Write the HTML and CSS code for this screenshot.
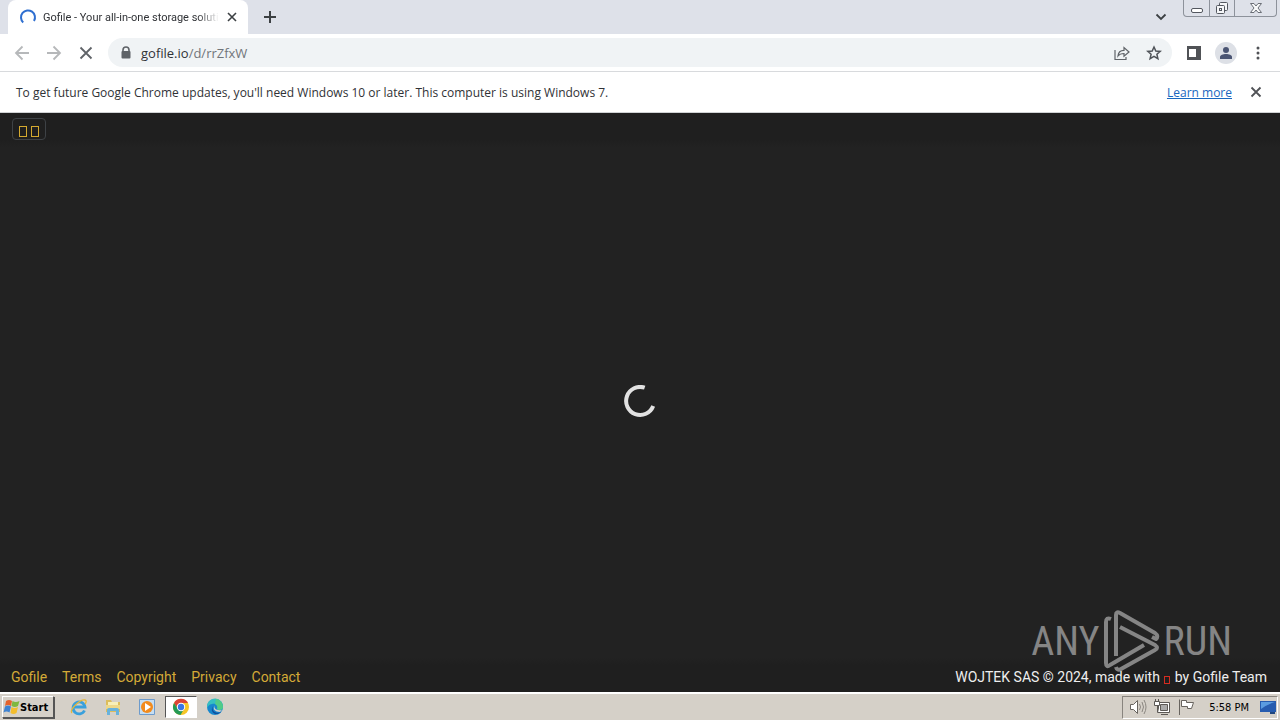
FILE: index.html
```html
<!DOCTYPE html>
<html lang="en">
<head>
<meta charset="utf-8">
<title>Gofile - Your all-in-one storage solution</title>
<link rel="stylesheet" href="styles.css">
</head>
<body>
<header class="tabstrip">
  <div class="tab">
    <svg class="tab-spinner" width="18" height="18" viewBox="0 0 18 18"><path d="M4.200 14.500A7 7 0 1 1 15 13" fill="none" stroke="#2f6fd0" stroke-width="2"/></svg>
    <span class="tab-title">Gofile - Your all-in-one storage soluti</span>
    <button class="icon-btn tab-close" aria-label="Close tab"><svg width="16" height="16" viewBox="0 0 16 16"><path d="M4 4l8 8M12 4l-8 8" stroke="#3c4043" stroke-width="1.600"/></svg></button>
  </div>
  <button class="icon-btn new-tab" aria-label="New tab"><svg width="16" height="16" viewBox="0 0 16 16"><path d="M8 2v12M2 8h12" stroke="#3c4043" stroke-width="2"/></svg></button>
  <div class="window-area">
    <button class="icon-btn tab-search" aria-label="Search tabs"><svg width="16" height="16" viewBox="0 0 16 16"><path d="M3.500 5.500L8 10l4.500-4.500" fill="none" stroke="#3c4043" stroke-width="1.800"/></svg></button>
    <div class="window-controls">
      <button aria-label="Minimize"><svg width="14" height="16" viewBox="0 0 14 16"><rect x="1.500" y="8.500" width="11" height="4" rx="1.500" fill="#fff" stroke="#53575f"/></svg></button>
      <button aria-label="Restore"><svg width="14" height="16" viewBox="0 0 14 16"><g fill="#f5f6f8" stroke="#53575f"><rect x="4.500" y="2.500" width="8" height="8" rx="1"/><rect x="1.500" y="5.500" width="8" height="8" rx="1"/><rect x="4.500" y="8.500" width="2" height="2"/></g></svg></button>
      <button aria-label="Close window"><svg width="14" height="16" viewBox="0 0 14 16"><path d="M1.500 3.500h3.500l2 2.500 2-2.500h3.500L9 8l3.500 4.500H9L7 10l-2 2.500H1.500L5 8z" fill="#f8f9fa" stroke="#6b6f77"/></svg></button>
    </div>
  </div>
</header>
<nav class="toolbar" aria-label="Browser">
  <button class="icon-btn" aria-label="Back"><svg width="16" height="16" viewBox="0 0 16 16"><path d="M15 8H2M8.500 1.500L2 8l6.500 6.500" fill="none" stroke="#b6b8ba" stroke-width="1.800"/></svg></button>
  <button class="icon-btn" aria-label="Forward"><svg width="16" height="16" viewBox="0 0 16 16"><path d="M1 8h13M7.500 1.500L14 8l-6.500 6.500" fill="none" stroke="#b6b8ba" stroke-width="1.800"/></svg></button>
  <button class="icon-btn" aria-label="Stop"><svg width="16" height="16" viewBox="0 0 16 16"><path d="M2.500 2.500l11 11M13.500 2.500l-11 11" stroke="#5f6368" stroke-width="1.800"/></svg></button>
  <div class="omnibox">
    <svg width="12" height="14" viewBox="0 0 12 14"><path d="M3 6V4a3 3 0 0 1 6 0v2" fill="none" stroke="#5f6368" stroke-width="1.600"/><rect x="1.500" y="5" width="9" height="7.500" rx="1" fill="#5f6368"/></svg>
    <span class="url">gofile.io<span class="url-path">/d/rrZfxW</span></span>
    <button class="icon-btn" aria-label="Share"><svg width="16" height="16" viewBox="0 0 16 16"><path d="M1 5v9.500h11V12M4 11c.3-4 2.500-5.700 6-5.700V2.500L15 7l-5 4.300V8.500C7.500 8.500 5.500 9 4 11z" fill="none" stroke="#5f6368" stroke-width="1.200"/></svg></button>
    <button class="icon-btn" aria-label="Bookmark"><svg width="16" height="16" viewBox="0 0 16 16"><path d="M8 2l1.800 4 4.400.4-3.300 2.900 1 4.300L8 11.300l-3.900 2.300 1-4.300-3.300-2.900L6.200 6z" fill="none" stroke="#4f5358" stroke-width="1.500"/></svg></button>
  </div>
  <button class="icon-btn" aria-label="Side panel"><svg width="16" height="16" viewBox="0 0 16 16"><path d="M1 1h14v14H1z" fill="#505256"/><path d="M3 4h7v8H3z" fill="#fff"/></svg></button>
  <button class="avatar" aria-label="Profile"><svg width="14" height="14" viewBox="0 0 14 14"><circle cx="7" cy="4" r="3" fill="#4b5573"/><path d="M1 13v-2c0-2 3-3 6-3s6 1 6 3v2z" fill="#4b5573"/></svg></button>
  <button class="icon-btn" aria-label="Menu"><svg width="16" height="16" viewBox="0 0 16 16" fill="#505256"><circle cx="8" cy="3" r="1.500"/><circle cx="8" cy="8" r="1.500"/><circle cx="8" cy="13" r="1.500"/></svg></button>
</nav>
<section class="infobar">
  <span class="infobar-text">To get future Google Chrome updates, you'll need Windows 10 or later. This computer is using Windows 7.</span>
  <a href="#">Learn more</a>
  <button class="icon-btn" aria-label="Dismiss"><svg width="16" height="16" viewBox="0 0 16 16"><path d="M3.500 3.500l9 9M12.500 3.500l-9 9" stroke="#505256" stroke-width="1.800"/></svg></button>
</section>
<div class="page">
  <div class="page-top"><button class="sidebar-toggle" aria-label="Toggle sidebar"><span class="missing"></span><span class="missing"></span></button></div>
  <main class="page-main">
    <svg width="32" height="32" viewBox="0 0 32 32"><path d="M20.700 2.700A14 14 0 1 0 29.200 21" fill="none" stroke="#e2e2e2" stroke-width="4"/></svg>
  </main>
  <footer class="page-footer">
    <nav class="footer-links" aria-label="Footer"><a href="#">Gofile</a><a href="#">Terms</a><a href="#">Copyright</a><a href="#">Privacy</a><a href="#">Contact</a></nav>
    <p class="credit">WOJTEK SAS © 2024, made with <span class="missing missing-red"></span> by Gofile Team</p>
  </footer>
  <div class="watermark">
    <span>ANY</span>
    <svg width="56" height="62" viewBox="0 0 56 62" fill="none" stroke="#858585" stroke-width="4" stroke-linejoin="round"><path d="M7 9Q2 7 2 12v41q0 5 4 2l34-20M12 46V5q0-4 4-2l35 20q4 3 1 6l-4-2M16 17l35 18q4 3 0 5L17 59q-4 2-5-2"/></svg>
    <span>RUN</span>
  </div>
</div>
<footer class="taskbar">
  <button class="start"><svg width="17" height="16" viewBox="0 0 17 16"><path d="M3 2q3-2 6 0L8 7Q5 5 2 7z" fill="#e5632d"/><path d="M9.500 2q3 2 7 0l-1.500 5q-3 2-6.500 0z" fill="#7eb83f"/><path d="M2 7.500q3-2 6 0l-1.500 6q-3-2-6 0z" fill="#3f83d2"/><path d="M8.500 8q3 2 6.500 0l-1.500 6q-3 2-6 0z" fill="#f3bd2d"/></svg>Start</button>
  <div class="launchers">
    <button aria-label="Internet Explorer"><svg width="18" height="18" viewBox="0 0 18 18" fill="none"><path d="M14.500 12.500A6 6 0 1 1 15 9H4" stroke="#39a0dc" stroke-width="2.800"/><path d="M2 15C-1 12 10 1 15 2c2 .5 1 3 0 4" stroke="#e4b73b" stroke-width="1.300"/></svg></button>
    <button aria-label="Explorer"><svg width="18" height="18" viewBox="0 0 18 18"><path d="M2 2h5l1 2h8v10H2z" fill="#dcbd5c"/><path d="M4 4h10v5H4z" fill="#f7efb8"/><path d="M2 7h14v4H2z" fill="#edd88a"/><path d="M3 17v-5q0-2 2-2h8q2 0 2 2v5h-3v-4H6v4z" fill="#68b2dc"/></svg></button>
    <button aria-label="Media Player"><svg width="18" height="18" viewBox="0 0 18 18"><path d="M1.500 1.500h15v15h-15z" fill="#c6def2" stroke="#6d9bcc"/><circle cx="9" cy="9" r="6" fill="#f28b1d"/><path d="M7 5l6 4-6 4z" fill="#fff"/></svg></button>
    <button class="active" aria-label="Chrome"><svg width="18" height="18" viewBox="0 0 18 18"><circle cx="9" cy="9" r="8" fill="#f6c526"/><path d="M2 5a8 8 0 0 1 14 0H9L6 11z" fill="#dc4437"/><path d="M2 5a8 8 0 0 0 6.500 12l3.500-6H6z" fill="#249a55"/><circle cx="9" cy="9" r="4.200" fill="#fff"/><circle cx="9" cy="9" r="3.200" fill="#3976e5"/></svg></button>
    <button aria-label="Edge"><svg width="18" height="18" viewBox="0 0 18 18"><circle cx="9" cy="9" r="8" fill="#1787cd"/><path d="M1 8a8 8 0 0 1 16 1c0 3-4 4-6 2 2-3-1-6-5-5-3 .5-4 2-5 4z" fill="#36bfc1"/><path d="M10 1a8 8 0 0 1 7 8c0 3-4 4-6 2 1-2 0-4-2-5z" fill="#51cb87"/><path d="M7 8c-2 5 3 8 8 6-5 5-12 0-8-6z" fill="#124e9c"/><path d="M9 7c-2 3 1 6 7 5l-2 2C9 14 6 11 9 7z" fill="#d5d0ca"/></svg></button>
  </div>
  <div class="tray">
    <svg width="18" height="18" viewBox="0 0 18 18" fill="#fff" stroke="#68645f"><path d="M1.500 6.500h3l4-4v13l-4-4h-3z"/><path d="M10.500 6q2 3 0 6M13 4q3 5 0 10M15 2q4 7 0 14" fill="none" stroke="#8b8781"/></svg>
    <svg width="18" height="18" viewBox="0 0 18 18" fill="#fff" stroke="#5c5955"><path d="M5.500 4.500h11v10h-11zM8 16.500h7"/><path d="M7.500 6.500h7v6h-7z" fill="#aaa"/><path d="M1.500 3.500h5v4h-5zM2.500 1v3M5.500 1v3M4.500 8v6.500H6"/></svg>
    <svg width="18" height="18" viewBox="0 0 18 18" fill="#fff" stroke="#68645f"><path d="M2.500 1.500V17M4.500 2.500h5v2h7l-2 6h-4v-2h-6z"/></svg>
    <time>5:58 PM</time>
    <svg width="18" height="18" viewBox="0 0 18 18"><path d="M1 3h16v11H1z" fill="#275caf"/><path d="M2 4h14q-7 2-14 7z" fill="#5b9ce0"/><path d="M11 14h5v2h-5z" fill="#21477e"/></svg>
  </div>
</footer>
</body>
</html>
```
FILE: styles.css
```css
* { box-sizing: border-box; }
body {
  margin: 0;
  min-height: 100vh;
  display: flex;
  flex-direction: column;
  font-family: "Open Sans", "Noto Sans", sans-serif;
  font-size: 12px;
  color: #303236;
}
button { font: inherit; color: inherit; padding: 0; border: 0; background: none; }
svg { display: block; flex: none; }
.icon-btn { width: 16px; height: 16px; flex: none; }

.tabstrip { height: 34px; display: flex; background: #dee1e9; padding-left: 8px; }
.tab {
  width: 240px;
  display: flex;
  align-items: center;
  padding: 0 8px 0 11px;
  background: #fff;
  border-radius: 8px 8px 0 0;
  font-family: Roboto, sans-serif;
  font-size: 11px;
}
.tab-title {
  flex: 1;
  min-width: 0;
  margin: 0 5px 0 6px;
  white-space: nowrap;
  mask-image: linear-gradient(to right, #000 88%, transparent);
}
.new-tab { margin: 9px 0 0 14px; }
.window-area { margin-left: auto; display: flex; gap: 14px; padding-right: 3px; }
.tab-search { margin-top: 9px; }
.window-controls {
  display: flex;
  height: 17px;
  border: 1px solid #8d929b;
  border-top: 0;
  border-radius: 0 0 4px 4px;
}
.window-controls button { width: 25px; display: grid; place-items: center; }
.window-controls button + button { border-left: 1px solid #8d929b; }
.window-controls button:last-child { width: 42px; }

.toolbar {
  height: 38px;
  display: flex;
  align-items: center;
  gap: 16px;
  padding: 0 14px;
  background: #fff;
  border-bottom: 1px solid #d8dadd;
}
.omnibox {
  flex: 1;
  height: 29px;
  display: flex;
  align-items: center;
  gap: 16px;
  margin: 0 -2px;
  padding: 0 10px 0 12px;
  border-radius: 15px;
  background: #f0f3f5;
}
.url { flex: 1; margin-left: -7px; font-size: 13px; }
.url-path { color: #70757a; }
.avatar {
  width: 22px;
  height: 22px;
  margin: 0 -3px;
  display: grid;
  place-items: center;
  border-radius: 50%;
  background: #dde0e6;
}

.infobar { height: 41px; display: flex; align-items: center; background: #fff; padding: 0 16px; border-bottom: 1px solid #d0d2d4; }
.infobar-text { flex: 1; }
.infobar a { color: #1967c0; margin-right: 16px; }

.page { flex: 1; display: flex; flex-direction: column; position: relative; background: #222; }
.page-top { height: 34px; padding: 5px 12px; background: linear-gradient(#1f1f1f 80%, #222); }
.sidebar-toggle {
  width: 34px;
  height: 22px;
  display: flex;
  justify-content: center;
  align-items: flex-end;
  gap: 4px;
  padding-bottom: 2px;
  border: 1px solid #3e4246;
  border-radius: 4px;
}
.missing { display: inline-block; width: 8px; height: 11px; border: 1px solid #d4a92f; }
.missing-red { width: 6px; height: 8px; margin: 0 1px; border-color: #d62c20; vertical-align: -2px; }
.page-main { flex: 1; display: grid; place-items: center; padding-bottom: 8px; }
.page-footer {
  height: 34px;
  margin-top: -4px;
  padding: 4px 13px 0 11px;
  display: flex;
  align-items: center;
  justify-content: space-between;
  background: linear-gradient(#222, #1f1f1f 20%);
  font-family: Roboto, sans-serif;
  font-size: 14px;
}
.footer-links { display: flex; gap: 15px; }
.footer-links a { color: #d4aa37; text-decoration: none; }
.credit { margin: 0; color: #eee; position: relative; z-index: 1; }
.watermark {
  position: absolute;
  right: 48px;
  bottom: 20px;
  display: flex;
  align-items: center;
  gap: 4px;
  color: #858585;
  font: 40px "Roboto Condensed", "Liberation Sans Narrow", sans-serif;
}

.taskbar {
  height: 28px;
  display: flex;
  align-items: center;
  padding: 0 2px;
  background: #d5d0c8;
  border-top: 2px solid #fff;
  color: #000;
}
.start {
  width: 52px;
  height: 22px;
  display: flex;
  align-items: center;
  border: 1px solid;
  border-color: #fff #555 #555 #fff;
  box-shadow: 1px 1px 0 #555;
  font: bold 11px "DejaVu Sans Condensed", sans-serif;
}
.launchers { display: flex; gap: 2px; margin-left: 9px; }
.launchers button { width: 32px; height: 22px; display: grid; place-items: center; }
.launchers .active { background: #fff; border: 1px solid; border-color: #555 #fff #fff #555; }
.tray {
  height: 23px;
  display: flex;
  align-items: center;
  gap: 6px;
  margin-left: auto;
  padding: 0 0 0 6px;
  border: 1px solid;
  border-color: #88847e #fff #fff #88847e;
}
.tray time { margin: 0 4px 0 8px; font: 11px "DejaVu Sans Condensed", sans-serif; }
```
